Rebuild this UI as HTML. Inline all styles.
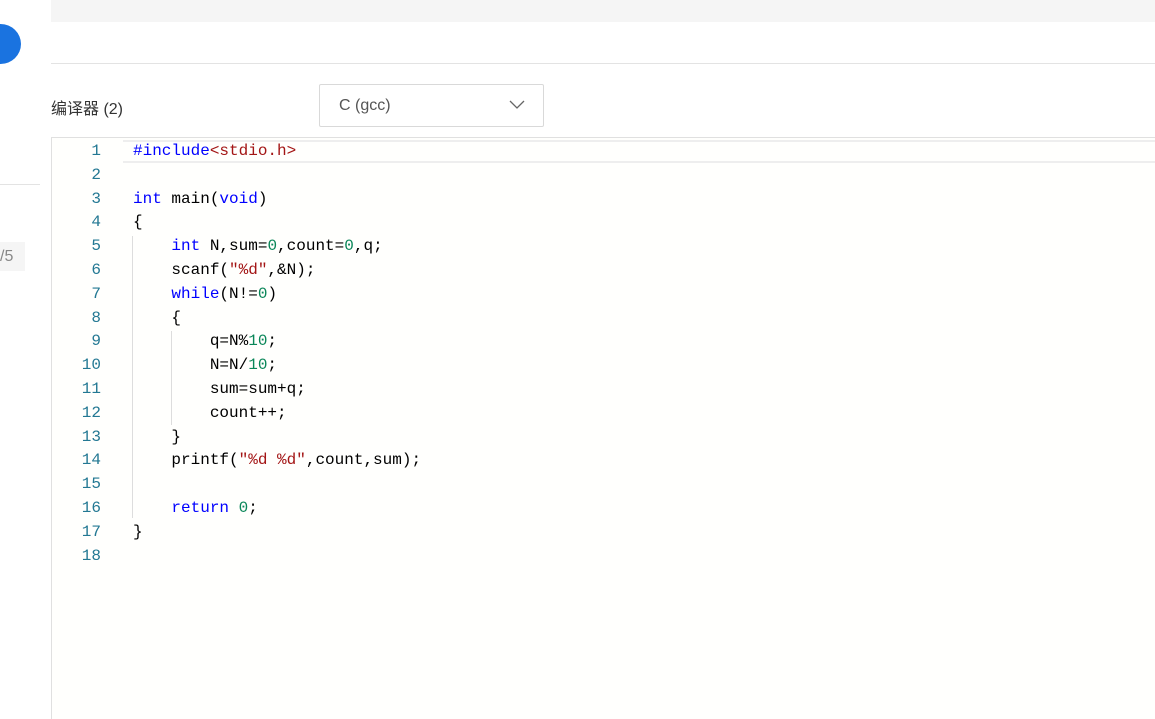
<!DOCTYPE html>
<html><head><meta charset="utf-8"><style>
body{margin:0;width:1155px;height:718px;background:#fff;position:relative;overflow:hidden;font-family:"Liberation Sans","Noto Sans CJK SC",sans-serif}
.abs{position:absolute}
.code{font-family:"Liberation Mono",monospace;font-size:16px;line-height:23.8px;white-space:pre}
.k{color:#0000ff}.n{color:#098658}.s{color:#a31515}.p{color:#0000ff}
</style></head><body>
<div class="abs" style="left:51px;top:0;width:1104px;height:22px;background:#f5f5f5"></div>
<div class="abs" style="left:-20px;top:24px;width:41px;height:40px;border-radius:50%;background:#1a73e0"></div>
<div class="abs" style="left:51px;top:63px;width:1104px;height:1px;background:#e3e3e3"></div>
<div class="abs" style="left:0;top:184px;width:40px;height:1px;background:#e3e3e3"></div>
<div class="abs" style="left:0;top:242px;width:25px;height:29px;background:#f5f5f5;color:#888;font-size:16px;line-height:29px">/5</div>
<div class="abs" style="left:51px;top:95px;font-size:16px;color:#333">编译器 (2)</div>
<div class="abs" style="left:319px;top:84px;width:223px;height:41px;border:1px solid #d9d9d9;border-radius:2px;background:#fff"></div>
<div class="abs" style="left:339px;top:97px;font-size:16px;color:#555">C (gcc)</div>
<svg class="abs" style="left:509px;top:100px" width="16" height="10"><path d="M1 1L8 8L15 1" fill="none" stroke="#666" stroke-width="1.3"/></svg>
<div class="abs" style="left:51px;top:137px;width:1104px;height:581px;border-top:1px solid #e0e0e0;border-left:1px solid #e0e0e0;background:#fffffd"></div>
<div class="abs" style="left:123px;top:140px;width:1032px;height:19px;border-top:2px solid #eee;border-bottom:2px solid #eee"></div>
<div class="abs" style="left:132px;top:236px;width:1px;height:282px;background:#ddd"></div>
<div class="abs" style="left:171px;top:331px;width:1px;height:94px;background:#ddd"></div>
<div class="abs code" style="left:60px;top:140px;width:41px;text-align:right;color:#237893">1
2
3
4
5
6
7
8
9
10
11
12
13
14
15
16
17
18</div>
<div class="abs code" style="left:133px;top:140px;color:#000"><span class="p">#include</span><span class="s">&lt;stdio.h&gt;</span>

<span class="k">int</span> main(<span class="k">void</span>)
{
    <span class="k">int</span> N,sum=<span class="n">0</span>,count=<span class="n">0</span>,q;
    scanf(<span class="s">"%d"</span>,&amp;N);
    <span class="k">while</span>(N!=<span class="n">0</span>)
    {
        q=N%<span class="n">10</span>;
        N=N/<span class="n">10</span>;
        sum=sum+q;
        count++;
    }
    printf(<span class="s">"%d %d"</span>,count,sum);

    <span class="k">return</span> <span class="n">0</span>;
}
</div>
</body></html>
